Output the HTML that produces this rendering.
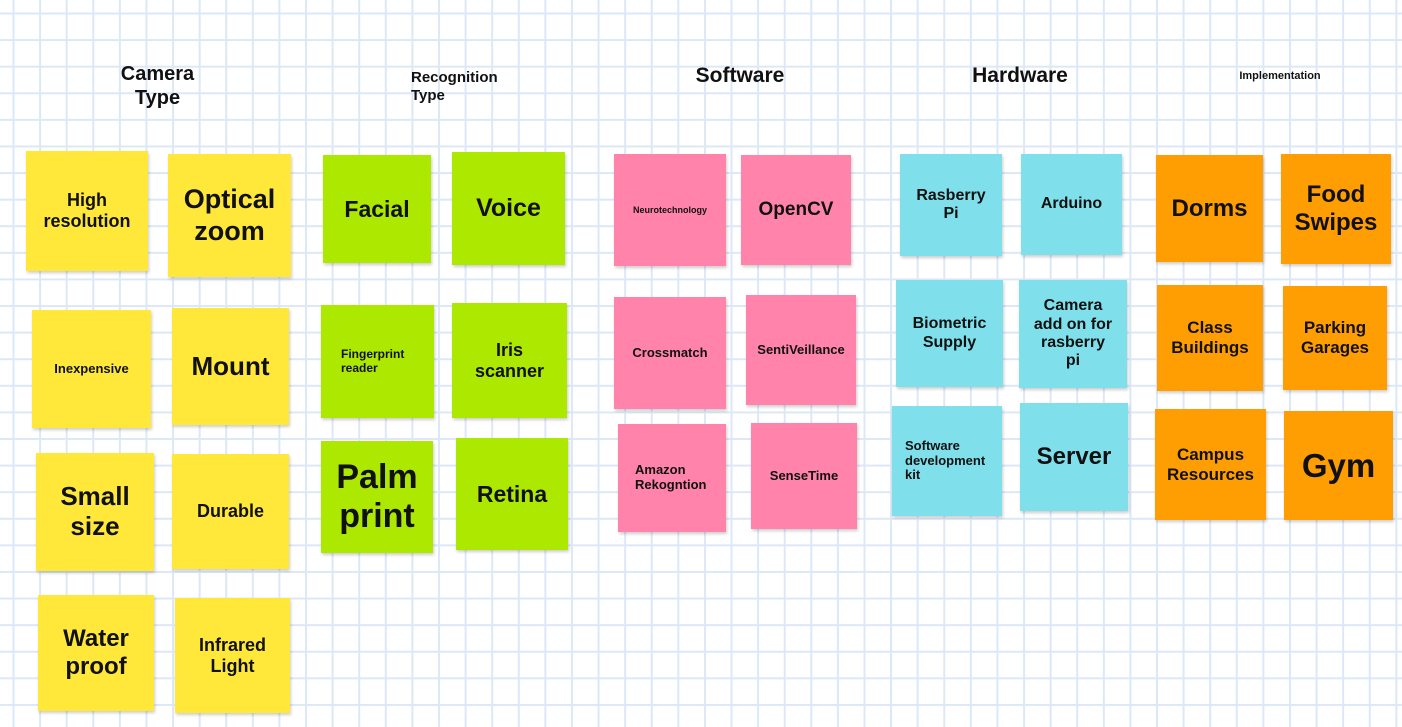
<!DOCTYPE html>
<html><head><style>
body{margin:0;width:1402px;height:727px;overflow:hidden;background:#fff;
background-image:linear-gradient(90deg,#dce8f8 2px,transparent 2px),linear-gradient(#dce8f8 2px,transparent 2px);
background-size:26.6px 26.6px;background-position:12.5px 12.5px;font-family:"Liberation Sans",sans-serif;font-weight:bold;color:#111;position:relative}
.t{position:absolute;text-align:center;line-height:1.2}
.s{position:absolute;display:flex;align-items:center;justify-content:center;text-align:center;box-shadow:1px 2px 3px rgba(0,0,0,.2);line-height:1.15}
.y{background:#ffe83a}.g{background:#ade800}.p{background:#ff83ab}.c{background:#7fdfea}.o{background:#ff9e03}
</style></head><body>
<div class="t" style="left:100px;top:62px;width:115px;font-size:20px">Camera<br>Type</div>
<div class="t" style="left:411px;top:69px;font-size:15px;text-align:left;line-height:1.2">Recognition<br>Type</div>
<div class="t" style="left:680px;top:63px;width:120px;font-size:21px">Software</div>
<div class="t" style="left:955px;top:63px;width:130px;font-size:21px">Hardware</div>
<div class="t" style="left:1225px;top:70px;width:110px;font-size:11px">Implementation</div>

<div class="s y" style="left:26px;top:151px;width:122px;height:120px;font-size:18px">High<br>resolution</div>
<div class="s y" style="left:168px;top:154px;width:123px;height:123px;font-size:27px">Optical<br>zoom</div>
<div class="s y" style="left:32px;top:310px;width:119px;height:118px;font-size:13px">Inexpensive</div>
<div class="s y" style="left:172px;top:308px;width:117px;height:117px;font-size:26px">Mount</div>
<div class="s y" style="left:36px;top:453px;width:118px;height:118px;font-size:26px">Small<br>size</div>
<div class="s y" style="left:172px;top:454px;width:117px;height:115px;font-size:18px">Durable</div>
<div class="s y" style="left:38px;top:595px;width:116px;height:116px;font-size:24px">Water<br>proof</div>
<div class="s y" style="left:175px;top:598px;width:115px;height:115px;font-size:18px">Infrared<br>Light</div>

<div class="s g" style="left:323px;top:155px;width:108px;height:108px;font-size:23px">Facial</div>
<div class="s g" style="left:452px;top:152px;width:113px;height:113px;font-size:25px">Voice</div>
<div class="s g" style="left:321px;top:305px;width:113px;height:113px;font-size:12px;justify-content:flex-start;padding-left:20px;box-sizing:border-box;text-align:left">Fingerprint<br>reader</div>
<div class="s g" style="left:452px;top:303px;width:115px;height:115px;font-size:18px">Iris<br>scanner</div>
<div class="s g" style="left:321px;top:441px;width:112px;height:112px;font-size:34px">Palm<br>print</div>
<div class="s g" style="left:456px;top:438px;width:112px;height:112px;font-size:23px">Retina</div>

<div class="s p" style="left:614px;top:154px;width:112px;height:112px;font-size:9px">Neurotechnology</div>
<div class="s p" style="left:741px;top:155px;width:110px;height:110px;font-size:19px">OpenCV</div>
<div class="s p" style="left:614px;top:297px;width:112px;height:112px;font-size:13px">Crossmatch</div>
<div class="s p" style="left:746px;top:295px;width:110px;height:110px;font-size:13px">SentiVeillance</div>
<div class="s p" style="left:618px;top:424px;width:108px;height:108px;font-size:13px;justify-content:flex-start;padding-left:17px;box-sizing:border-box;text-align:left">Amazon<br>Rekogntion</div>
<div class="s p" style="left:751px;top:423px;width:106px;height:106px;font-size:13px">SenseTime</div>

<div class="s c" style="left:900px;top:154px;width:102px;height:102px;font-size:16px">Rasberry<br>Pi</div>
<div class="s c" style="left:1021px;top:154px;width:101px;height:101px;font-size:16px">Arduino</div>
<div class="s c" style="left:896px;top:280px;width:107px;height:107px;font-size:16px">Biometric<br>Supply</div>
<div class="s c" style="left:1019px;top:280px;width:108px;height:108px;font-size:16px">Camera<br>add on for<br>rasberry<br>pi</div>
<div class="s c" style="left:892px;top:406px;width:110px;height:110px;font-size:13px;justify-content:flex-start;padding-left:13px;box-sizing:border-box;text-align:left">Software<br>development<br>kit</div>
<div class="s c" style="left:1020px;top:403px;width:108px;height:108px;font-size:24px">Server</div>

<div class="s o" style="left:1156px;top:155px;width:107px;height:107px;font-size:24px">Dorms</div>
<div class="s o" style="left:1281px;top:154px;width:110px;height:110px;font-size:24px">Food<br>Swipes</div>
<div class="s o" style="left:1157px;top:285px;width:106px;height:106px;font-size:17px">Class<br>Buildings</div>
<div class="s o" style="left:1283px;top:286px;width:104px;height:104px;font-size:17px">Parking<br>Garages</div>
<div class="s o" style="left:1155px;top:409px;width:111px;height:111px;font-size:17px">Campus<br>Resources</div>
<div class="s o" style="left:1284px;top:411px;width:109px;height:109px;font-size:33px">Gym</div>
</body></html>
